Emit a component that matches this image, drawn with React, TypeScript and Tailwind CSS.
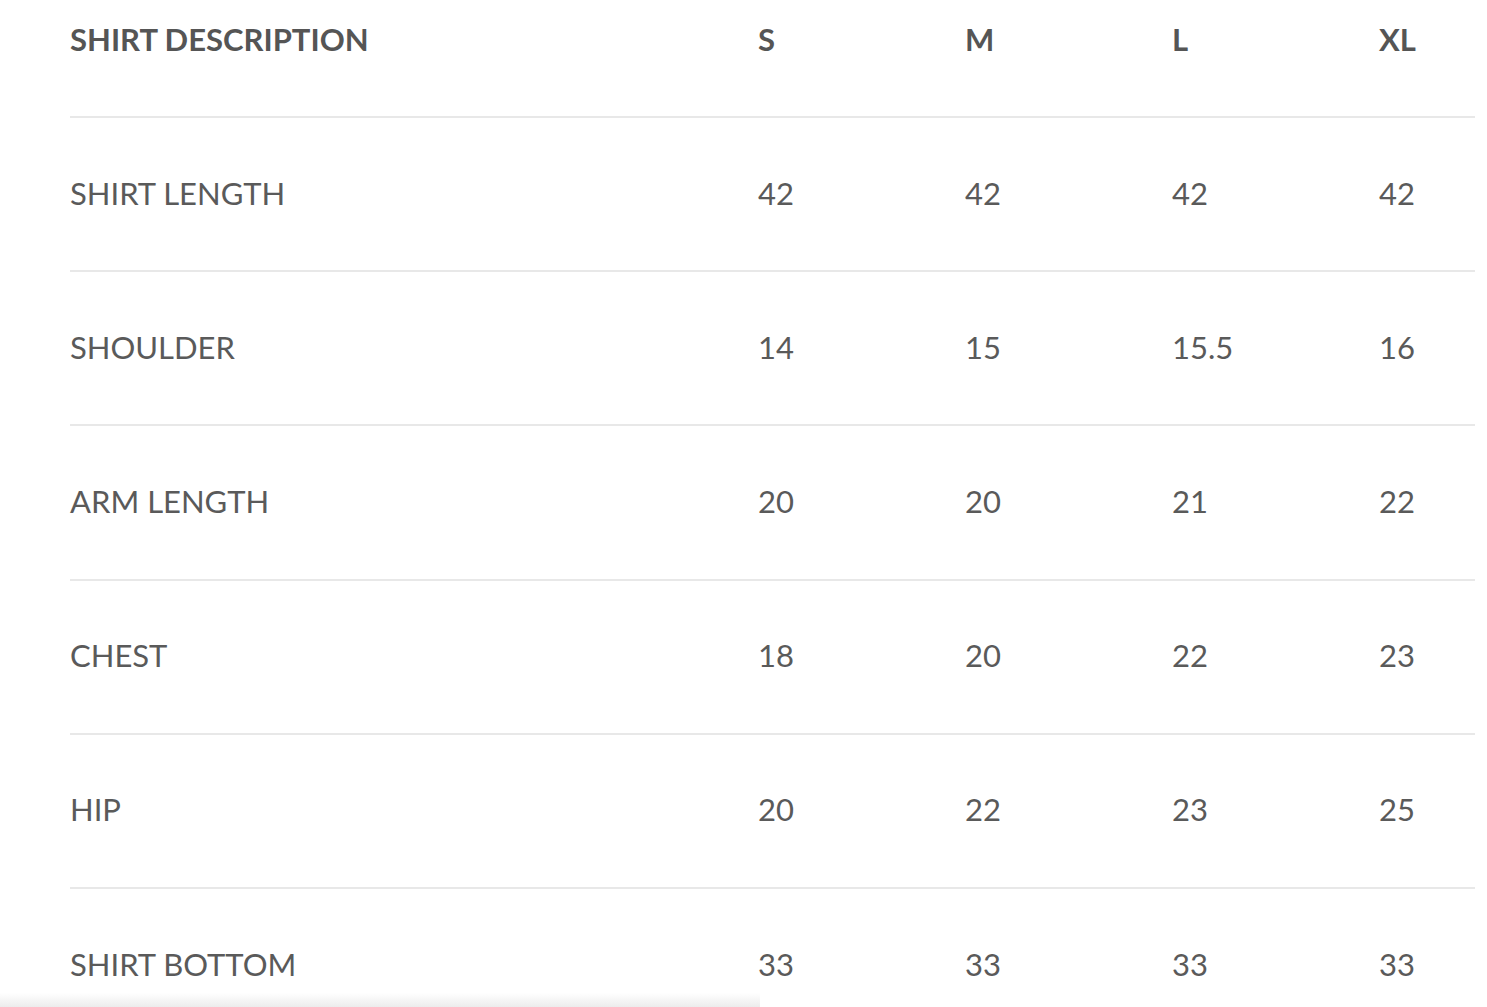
const sizes = ['S', 'M', 'L', 'XL'];

const rows: { label: string; values: string[] }[] = [
  { label: 'SHIRT LENGTH', values: ['42', '42', '42', '42'] },
  { label: 'SHOULDER', values: ['14', '15', '15.5', '16'] },
  { label: 'ARM LENGTH', values: ['20', '20', '21', '22'] },
  { label: 'CHEST', values: ['18', '20', '22', '23'] },
  { label: 'HIP', values: ['20', '22', '23', '25'] },
  { label: 'SHIRT BOTTOM', values: ['33', '33', '33', '33'] },
];

export default function App() {
  return (
    <div className="relative h-screen overflow-hidden bg-white font-['Lato','Liberation_Sans',sans-serif] text-[31px] text-[#555555]">
      <div className="ml-[70px] w-[1405px]">
        {/* Header */}
        <div className="grid h-[116px] grid-cols-[688px_207px_207px_207px_1fr] items-start pt-[23px] font-bold leading-[32px]">
          <div>SHIRT DESCRIPTION</div>
          {sizes.map((s) => (
            <div key={s}>{s}</div>
          ))}
        </div>

        {/* Rows */}
        {rows.map((row) => (
          <div
            key={row.label}
            className="grid h-[154.2px] grid-cols-[688px_207px_207px_207px_1fr] items-center border-t-2 border-[#e8e8e8] pb-[3px] leading-[32px] text-[#5a5a5a]"
          >
            <div>{row.label}</div>
            {row.values.map((v, i) => (
              <div key={i}>{v}</div>
            ))}
          </div>
        ))}
      </div>

      {/* bottom fade bar */}
      <div className="absolute bottom-0 left-0 h-[14px] w-[760px] bg-gradient-to-b from-white to-[#ececec]" />
    </div>
  );
}
